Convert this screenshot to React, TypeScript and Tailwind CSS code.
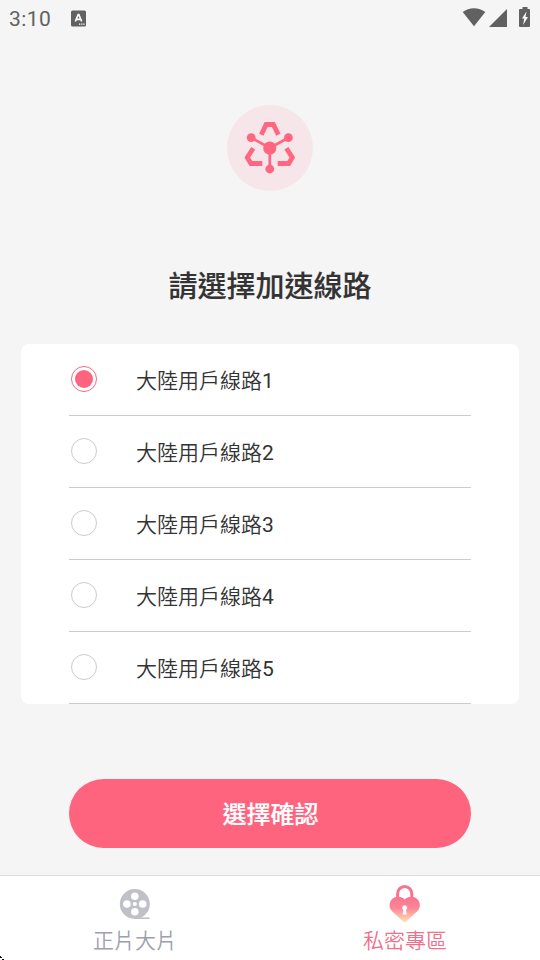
import { useState } from 'react';

const routes = [1, 2, 3, 4, 5];

function StatusBar() {
    return (
        <div className="flex h-9 items-center justify-between pl-[9px] pr-[9px] text-[#616161]">
            <div className="flex items-center">
                <span className="w-[62px] text-[21px] leading-9 tracking-[0.4px] font-[Roboto,sans-serif] pt-0.5">3:10</span>
                <svg width="15" height="17" viewBox="0 0 15 17">
                    <rect width="15" height="16" y="0.5" rx="1.5" fill="currentColor" />
                    <path d="M4.3 11.5 7.2 4.5h.6l2.9 7M5.3 9.3h4.4" fill="none" stroke="#fff" strokeWidth="1.7" />
                    <path d="M8 14.2h1.3M10.2 14.2h1.3M12.3 14.2h1.3" stroke="#fff" strokeWidth="1.3" />
                </svg>
            </div>
            <svg width="69" height="22" viewBox="0 0 69 22" fill="currentColor">
                <path d="M.7 5C7-.1 17-.1 23.300 5L12 19.300z" />
                <path d="M27 20 45 2v18z" />
                <path d="M60.500 0h5v2H67q1 0 1 1v16q0 1-1 1h-9q-1 0-1-1V3q0-1 1-1h2.500z" />
                <path d="M64.500 4.500 60 11.500h2.300L61 18l5-8h-2.500z" fill="#fff" />
            </svg>
        </div>
    );
}

function Logo() {
    return (
        <svg width="86" height="86" viewBox="0 0 86 86" className="mx-auto mt-[69px]">
            <circle cx="43" cy="43" r="43" fill="#f6e6ea" />
            <g fill="none" stroke="#ff6781" strokeWidth="4.800">
                <path d="M34.300 29.800 39.200 19.500h7.200l4.900 10.300" />
                <path d="M26.200 43.200 20.300 52.500l3.600 6h11.400" />
                <path d="M59.400 43.200 65.300 52.500l-3.600 6H50.700" />
                <path d="M24.100 32.700 42.800 43l18.700-10.300M42.800 43v21" strokeWidth="2.700" />
            </g>
            <g fill="#ff6781">
                <circle cx="42.800" cy="43" r="6.600" />
                <circle cx="24.200" cy="32.700" r="4.400" />
                <circle cx="61.400" cy="32.700" r="4.400" />
                <circle cx="42.800" cy="64" r="4.400" />
            </g>
        </svg>
    );
}

function FilmIcon() {
    return (
        <svg width="32" height="32" viewBox="0 0 32 32">
            <path d="M16 29.200h14.500" stroke="#c0c0c8" strokeWidth="1.600" />
            <circle cx="15.800" cy="15" r="15" fill="#c0c0c8" />
            <g fill="#fff">
                <circle cx="15.800" cy="7.200" r="3.800" />
                <circle cx="15.800" cy="22.800" r="3.800" />
                <circle cx="7.900" cy="15" r="3.800" />
                <circle cx="23.700" cy="15" r="3.800" />
                <circle cx="15.800" cy="15" r="2.100" />
            </g>
        </svg>
    );
}

function LockIcon() {
    return (
        <svg width="32" height="38" viewBox="0 0 32 38">
            <defs>
                <linearGradient id="heart" x1="0" y1="0" x2="0" y2="1">
                    <stop offset="0" stopColor="#f97490" />
                    <stop offset="0.450" stopColor="#ff8497" />
                    <stop offset="1" stopColor="#ffe0b0" />
                </linearGradient>
            </defs>
            <path d="M8.600 15V8.700a7.100 7.100 0 0 1 14.200 0V15" fill="none" stroke="#f7738e" strokeWidth="3" />
            <path d="M15.700 14.500C12.500 11 6.500 10.800 3 14.200-.2 17.500-.2 22.500 2.800 26L13.500 36q2.200 1.800 4.400 0L28.600 26c3-3.500 3-8.500-.2-11.800-3.500-3.400-9.500-3.200-12.700.3z" fill="url(#heart)" />
            <path d="M15.700 20.200a2.600 2.600 0 0 1 1.300 4.800l.8 4.500h-4.200l.8-4.500a2.600 2.600 0 0 1 1.300-4.800z" fill="#fff" />
        </svg>
    );
}

export default function App() {
    const [selected, setSelected] = useState(1);

    return (
        <div lang="zh-TW" className="relative flex h-[960px] w-[540px] flex-col overflow-hidden bg-[#f5f5f5] font-[Roboto,'Noto_Sans_CJK_TC',sans-serif] text-[#333]">
            <StatusBar />
            <Logo />
            <h1 className="mt-[76px] text-center text-[29px] font-medium leading-10 [-webkit-text-stroke:0.15px]">請選擇加速線路</h1>

            <div className="mx-[21px] mt-[37px] rounded-lg bg-white px-12">
                {routes.map((n) => (
                    <button
                        key={n}
                        onClick={() => setSelected(n)}
                        className="flex h-[72px] w-full items-center border-b border-[#ccc] pl-0.5 text-left"
                    >
                        <span
                            className={`mb-0.5 flex size-[26px] items-center justify-center rounded-full border ${selected === n ? 'border-[#f06d85]' : 'border-[#ccc]'}`}
                        >
                            {selected === n && <span className="size-[18px] rounded-full bg-[#ff647e]" />}
                        </span>
                        <span className="ml-[39px] pt-0.5 text-[21px] font-[350] leading-8">
                            大陸用戶線路<span className="font-normal">{n}</span>
                        </span>
                    </button>
                ))}
            </div>

            <button className="mx-[69px] mt-[75px] h-[69px] rounded-full bg-[#ff647e] pt-0.5 pl-px text-2xl font-medium text-white [-webkit-text-stroke:0.2px]">
                選擇確認
            </button>

            <nav className="mt-[27px] flex flex-1 border-t border-[#ddd] bg-white text-[21px] font-[350] leading-8">
                <button className="flex flex-1 flex-col items-center text-[#a0a0ac]">
                    <span className="mt-[13px] h-9"><FilmIcon /></span>
                    <span>正片大片</span>
                </button>
                <button className="flex flex-1 flex-col items-center text-[#f0708a]">
                    <span className="mt-[9px] h-10"><LockIcon /></span>
                    <span>私密專區</span>
                </button>
            </nav>

            <svg width="4" height="4" viewBox="0 0 4 4" className="absolute bottom-0 left-0">
                <path d="M0 0h1v1h1v1H0zM2 3h2v1H2z" fill="#111" />
            </svg>
        </div>
    );
}
